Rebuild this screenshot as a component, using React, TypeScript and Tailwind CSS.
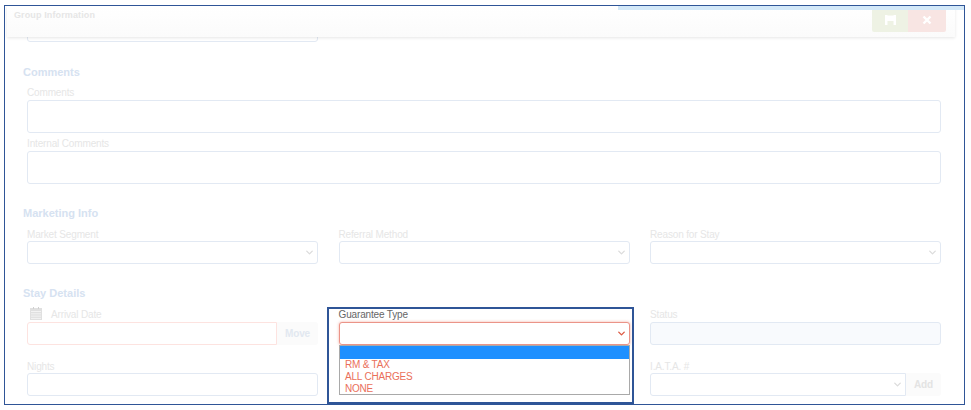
import React from "react";
import { ChevronDown } from "lucide-react";

const Label = ({ children, className = "" }: { children: React.ReactNode; className?: string }) => (
  <div className={`h-[14px] leading-[15px] text-[10px] tracking-[-0.15px] text-[#e6e6e6] ${className}`}>{children}</div>
);

const Heading = ({ children, className = "" }: { children: React.ReactNode; className?: string }) => (
  <div className={`h-[16px] leading-[16px] -ml-[4px] text-[11px] font-bold text-[#d6e2f1] ${className}`}>{children}</div>
);

const Input = ({ className = "" }: { className?: string }) => (
  <input readOnly className={`block w-full h-[23px] rounded-[3px] border border-[#e2e9f3] bg-white ${className}`} />
);

const Select = ({ className = "" }: { className?: string }) => (
  <div className={`flex items-center justify-end pr-[2px] w-full h-[23px] rounded-[3px] border border-[#e2e9f3] bg-white text-[#dcdcdc] ${className}`}>
    <ChevronDown size={11} strokeWidth={3} />
  </div>
);

const SideButton = ({ children, className = "" }: { children: React.ReactNode; className?: string }) => (
  <div className={`flex items-center justify-center h-[23px] shrink-0 rounded-r-[3px] bg-[#fbfbfb] text-[10px] tracking-[-0.15px] font-bold ${className}`}>{children}</div>
);

export default function App() {
  return (
    <div className="w-[971px] h-[410px] bg-white overflow-hidden pt-[5px] pl-[4px] font-['Liberation_Sans',Arial,sans-serif]">
      <div className="relative w-[961px] h-[400px] border border-[#2f5597] overflow-hidden">
        {/* top strip */}
        <div className="absolute top-0 right-0 w-[346px] h-[4px] bg-[#d3e8f8] z-10" />

        {/* sticky header over the scrolled form */}
        <div className="absolute top-0 left-[2px] w-[948px] h-[31px] bg-gradient-to-b from-white to-[#fbfbfb] shadow-[0_1px_3px_rgba(0,0,0,0.1)] flex justify-between z-[5]">
          <div className="pl-[7px] pt-[2px] text-[9px] tracking-[0.12px] leading-[14px] font-bold text-[#e6e6e6]">Group Information</div>
          <div className="flex mr-[9px] mt-[2px] h-[24px] rounded-[2px] overflow-hidden">
            <div className="flex items-center justify-center w-[36px] bg-[#eef2e4]">
              <svg width="11" height="10" viewBox="0 0 11 10">
                <path d="M0 0h11v10H8.5V6h-6v4H0z" fill="#fff" />
                <path d="M2.5 0h6v1h-6z" fill="#f6f8f0" />
              </svg>
            </div>
            <div className="flex items-center justify-center w-[38px] bg-[#f8e5e3]">
              <svg width="10" height="10" viewBox="0 0 10 10">
                <path d="M1.5 1.5l7 7M8.5 1.5l-7 7" stroke="#fff" strokeWidth="2.4" />
              </svg>
            </div>
          </div>
        </div>

        {/* form */}
        <div className="pl-[22px] pr-[23px] pt-[13px] w-[959px]">
          <div className="grid grid-cols-3 gap-x-[20.5px]">
            <Input />
          </div>

          <Heading className="mt-[22px]">Comments</Heading>
          <Label className="mt-[5px] mb-[1px]">Comments</Label>
          <textarea readOnly className="block w-full h-[33px] resize-none rounded-[3px] border border-[#e2e9f3] bg-white" />
          <Label className="mt-[3px] mb-[1px]">Internal Comments</Label>
          <textarea readOnly className="block w-full h-[33px] resize-none rounded-[3px] border border-[#e2e9f3] bg-white" />

          <Heading className="mt-[21px]">Marketing Info</Heading>
          <div className="grid grid-cols-3 gap-x-[20.5px] mt-[6px]">
            {["Market Segment", "Referral Method", "Reason for Stay"].map((name) => (
              <div key={name}>
                <Label>{name}</Label>
                <Select />
              </div>
            ))}
          </div>

          <Heading className="mt-[21px]">Stay Details</Heading>
          <div className="grid grid-cols-3 gap-x-[20.5px] gap-y-[14px] mt-[6px]">
            <div>
              <div className="flex items-start gap-[9px] mb-[1px] h-[14px] pl-[3px]">
                <svg width="12" height="13" viewBox="0 0 12 13" className="shrink-0">
                  <path d="M0 1h12v12H0z" fill="#e0e0e0" />
                  <path d="M1 4.5h10M1 6.8h10M1 9.1h10M1 11.4h10" stroke="#f5f5f5" strokeWidth="0.9" />
                  <path d="M3 0h1v2H3zM8 0h1v2H8z" fill="#d0d0d0" />
                </svg>
                <span className="text-[10px] tracking-[-0.15px] leading-[15px] text-[#e6e6e6]">Arrival Date</span>
              </div>
              <div className="flex">
                <Input className="border-[#fde3e0] rounded-r-none" />
                <SideButton className="w-[41px] text-[#e2e8f0]">Move</SideButton>
              </div>
            </div>
            <div>
              <Label className="mb-[1px] !text-[#666666]">Guarantee Type</Label>
              <Select className="!border-[#eb9488] !text-[#dc5a44] shadow-[0_0_3px_rgba(232,110,90,0.55)]" />
            </div>
            <div>
              <Label className="mb-[1px]">Status</Label>
              <Input className="!bg-[#f8fafd]" />
            </div>

            <div>
              <Label>Nights</Label>
              <Input />
            </div>
            <div />
            <div>
              <Label>I.A.T.A. #</Label>
              <div className="flex">
                <Select className="rounded-r-none" />
                <SideButton className="w-[35px] text-[#e3e3e3]">Add</SideButton>
              </div>
            </div>
          </div>
        </div>

        {/* open dropdown */}
        <div className="absolute left-[334px] top-[339px] w-[291px] h-[50px] border border-[#a9a9a9] bg-white z-20 text-[10px] tracking-[-0.2px] leading-[12px] text-[#ea6f5a]">
          <div className="h-[13px] bg-[#1e90ff]" />
          <div className="pl-[5px]">RM &amp; TAX</div>
          <div className="pl-[5px]">ALL CHARGES</div>
          <div className="pl-[5px]">NONE</div>
        </div>

        {/* highlight box */}
        <div className="absolute left-[322px] top-[301px] w-[307px] h-[97px] border-2 border-[#2f5597] z-30" />
      </div>
    </div>
  );
}
